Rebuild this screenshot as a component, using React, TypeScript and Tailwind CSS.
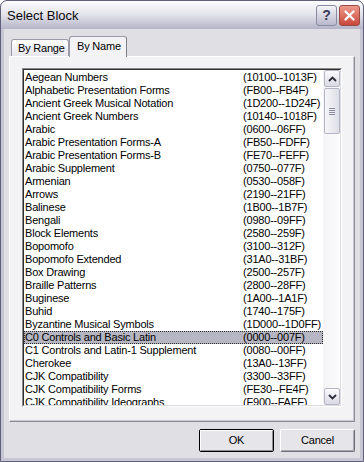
import React from "react";

const rows: [string, string][] = [
  ["Aegean Numbers", "(10100--1013F)"],
  ["Alphabetic Presentation Forms", "(FB00--FB4F)"],
  ["Ancient Greek Musical Notation", "(1D200--1D24F)"],
  ["Ancient Greek Numbers", "(10140--1018F)"],
  ["Arabic", "(0600--06FF)"],
  ["Arabic Presentation Forms-A", "(FB50--FDFF)"],
  ["Arabic Presentation Forms-B", "(FE70--FEFF)"],
  ["Arabic Supplement", "(0750--077F)"],
  ["Armenian", "(0530--058F)"],
  ["Arrows", "(2190--21FF)"],
  ["Balinese", "(1B00--1B7F)"],
  ["Bengali", "(0980--09FF)"],
  ["Block Elements", "(2580--259F)"],
  ["Bopomofo", "(3100--312F)"],
  ["Bopomofo Extended", "(31A0--31BF)"],
  ["Box Drawing", "(2500--257F)"],
  ["Braille Patterns", "(2800--28FF)"],
  ["Buginese", "(1A00--1A1F)"],
  ["Buhid", "(1740--175F)"],
  ["Byzantine Musical Symbols", "(1D000--1D0FF)"],
  ["C0 Controls and Basic Latin", "(0000--007F)"],
  ["C1 Controls and Latin-1 Supplement", "(0080--00FF)"],
  ["Cherokee", "(13A0--13FF)"],
  ["CJK Compatibility", "(3300--33FF)"],
  ["CJK Compatibility Forms", "(FE30--FE4F)"],
  ["CJK Compatibility Ideographs", "(F900--FAFF)"],
];

function Chevron({ up }: { up: boolean }) {
  return (
    <svg width="9" height="6" viewBox="0 0 9 6">
      <path
        d={up ? "M1 5 L4.5 1.5 L8 5" : "M1 1 L4.5 4.5 L8 1"}
        fill="none"
        stroke="#2a2a36"
        strokeWidth="1.8"
      />
    </svg>
  );
}

function SbButton({ up }: { up: boolean }) {
  return (
    <div className="h-[17px] w-[16px] rounded-[2px] border border-[#b4b4c4] bg-gradient-to-b from-[#fbfbfd] to-[#d9d9e3] flex items-center justify-center">
      <Chevron up={up} />
    </div>
  );
}

export default function App() {
  return (
    <div
      className="w-[364px] h-[462px] bg-[#c6c6d4] border border-[#60607a] rounded-t-[7px] flex flex-col overflow-hidden"
      style={{ fontFamily: '"Liberation Sans", Arial, sans-serif' }}
    >
      {/* Title bar */}
      <div className="h-[28px] shrink-0 flex items-center pl-[6px] pr-[3px] bg-gradient-to-b from-[#fdfdfe] via-[#e2e2ea] to-[#b4b4c8] rounded-t-[6px]">
        <span className="flex-1 text-[13px] text-[#0a0a0a] pt-[1px]">Select Block</span>
        <div className="w-[21px] h-[21px] rounded-[3px] border border-[#8a8aa0] bg-gradient-to-b from-[#f4f4f8] to-[#b8b8cc] flex items-center justify-center text-[14px] font-bold text-[#3a3a56] mr-[2px]">
          ?
        </div>
        <div className="w-[21px] h-[21px] rounded-[3px] border border-[#9a4a44] bg-gradient-to-b from-[#ee9a8c] to-[#c8463a] flex items-center justify-center">
          <svg width="11" height="11" viewBox="0 0 11 11">
            <path d="M1.5 1.5 L9.5 9.5 M9.5 1.5 L1.5 9.5" stroke="#fff" strokeWidth="2.2" strokeLinecap="round" />
          </svg>
        </div>
      </div>

      {/* Client */}
      <div className="flex-1 mx-[3px] mb-[3px] bg-[#e0dfe3] flex flex-col px-[5px] pt-[7px] pb-[4px] text-[11px] text-black tracking-[-0.2px]">
        {/* Tabs */}
        <div className="h-[20px] flex items-end pl-[2px] relative z-10">
          <div className="h-[17px] w-[58px] border border-b-0 border-[#9a9aa6] rounded-t-[3px] bg-gradient-to-b from-[#ffffff] to-[#e6e6ec] flex items-center pl-[6px]">
            By Range
          </div>
          <div className="h-[21px] w-[58px] -mb-[1px] border border-b-0 border-[#9a9aa6] border-r-[#7e7e8a] rounded-t-[3px] bg-[#f3f3f6] flex items-center pl-[7px] pb-[2px]">
            By Name
          </div>
        </div>

        {/* Tab panel */}
        <div className="h-[366px] border border-t-white border-l-white border-r-[#8c8c98] border-b-[#8c8c98] bg-[#f3f3f6] shadow-[inset_-1px_-1px_0_#c8c8d0] pt-[11px] pl-[12px] pr-[12px] pb-[14px] flex flex-col">
          <div className="flex-1 flex border border-t-[#8a8a8a] border-l-[#8a8a8a] border-r-white border-b-white overflow-hidden">
            <div className="flex-1 flex border border-t-[#303030] border-l-[#303030] border-r-[#dcdce2] border-b-[#dcdce2] bg-white overflow-hidden">
              <div className="flex-1 pt-[1px] overflow-hidden">
                {rows.map(([name, range], i) => (
                  <div
                    key={name}
                    className={
                      i === 20
                        ? "h-[13px] leading-[13px] flex whitespace-nowrap bg-[#b6b6c2] outline-1 outline-dotted outline-[#2a2a2a] -outline-offset-1"
                        : "h-[13px] leading-[13px] flex whitespace-nowrap"
                    }
                  >
                    <span className="w-[219px] pl-[1px] shrink-0 overflow-hidden">{name}</span>
                    <span>{range}</span>
                  </div>
                ))}
              </div>
              {/* Scrollbar */}
              <div className="w-[17px] shrink-0 bg-gradient-to-r from-[#f4f4f6] to-[#fcfcfd] flex flex-col pl-[1px]">
                <SbButton up />
                <div className="mt-[1px] h-[46px] w-[16px] rounded-[2px] border border-[#b4b4c4] bg-gradient-to-r from-[#f6f6f9] to-[#dedee7] flex flex-col items-center justify-center gap-[1px]">
                  <div className="w-[6px] h-[1px] bg-[#8e8ea0]" />
                  <div className="w-[6px] h-[1px] bg-[#8e8ea0]" />
                  <div className="w-[6px] h-[1px] bg-[#8e8ea0]" />
                  <div className="w-[6px] h-[1px] bg-[#8e8ea0]" />
                </div>
                <div className="flex-1" />
                <SbButton up={false} />
              </div>
            </div>
          </div>
        </div>

        {/* Buttons */}
        <div className="flex justify-end gap-[6px] mt-[7px]">
          <div className="w-[75px] h-[23px] border border-black rounded-[2px] bg-[#e6e6ea] flex">
            <div className="flex-1 border border-t-white border-l-white border-r-[#8e8e98] border-b-[#8e8e98] flex items-center justify-center text-[11px]">
              OK
            </div>
          </div>
          <div className="w-[75px] h-[23px] border border-t-white border-l-white border-r-[#6e6e78] border-b-[#6e6e78] rounded-[2px] bg-[#e6e6ea] shadow-[inset_-1px_-1px_0_#a8a8b2] flex items-center justify-center text-[11px]">
            Cancel
          </div>
        </div>
      </div>
    </div>
  );
}
